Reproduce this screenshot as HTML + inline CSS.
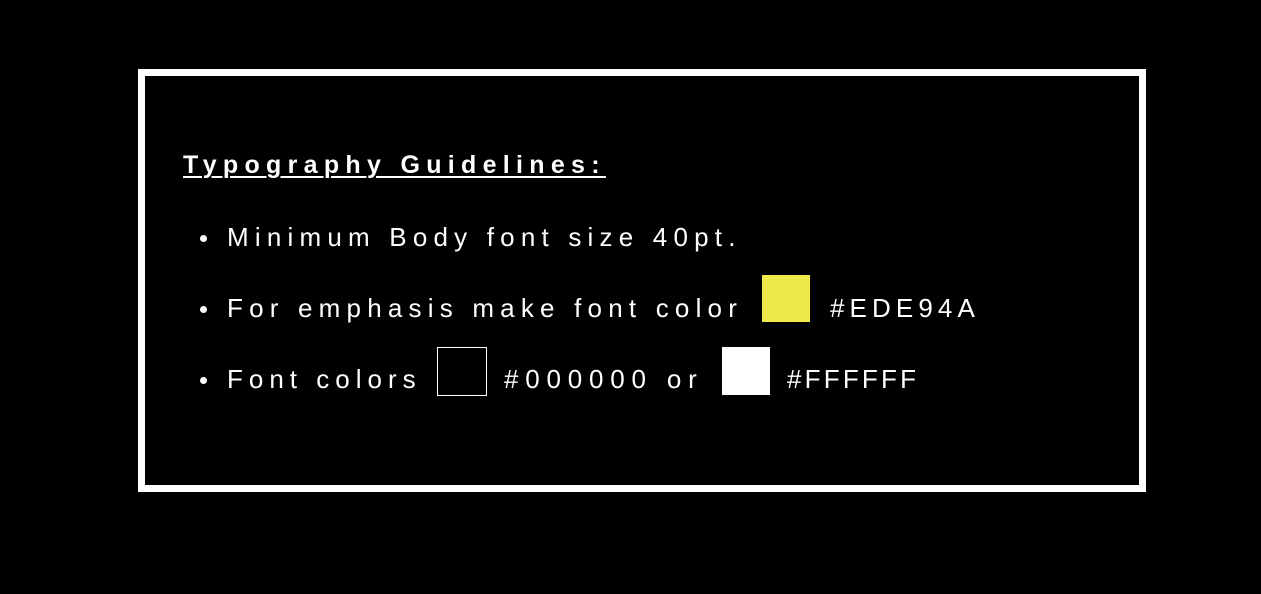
<!DOCTYPE html>
<html><head><style>
html,body{margin:0;padding:0;background:#000;width:1261px;height:594px;overflow:hidden;font-family:"Liberation Sans",sans-serif;color:#fff}
.box{position:absolute;left:138px;top:69px;width:994px;height:409px;border:7px solid #fff}
.t{position:absolute;white-space:nowrap;font-size:26px;letter-spacing:6.2px;line-height:1}
.h{position:absolute;left:183px;top:151px;font-size:25px;font-weight:bold;letter-spacing:6.3px;text-decoration:underline;text-underline-offset:3px;text-decoration-thickness:2px;white-space:nowrap}
.dot{position:absolute;width:7px;height:7px;border-radius:50%;background:#fff;left:200px}
.sw{position:absolute}
</style></head><body>
<div class="box"></div>
<div class="h">Typography Guidelines:</div>
<div class="dot" style="top:235px"></div>
<div class="dot" style="top:306px"></div>
<div class="dot" style="top:377px"></div>
<div class="t" style="left:227px;top:224px">Minimum Body font size 40pt.</div>
<div class="t" style="left:227px;top:295px">For emphasis make font color</div>
<div class="sw" style="left:762px;top:275px;width:48px;height:47px;background:#EDE94A"></div>
<div class="t" style="left:830px;top:295px;letter-spacing:5.1px">#EDE94A</div>
<div class="t" style="left:227px;top:366px;letter-spacing:6px">Font colors</div>
<div class="sw" style="left:437px;top:347px;width:48px;height:47px;border:1.5px solid #fff"></div>
<div class="t" style="left:504px;top:366px;letter-spacing:6.8px">#000000 or</div>
<div class="sw" style="left:722px;top:347px;width:48px;height:48px;background:#fff"></div>
<div class="t" style="left:787px;top:366px;letter-spacing:3.2px">#FFFFFF</div>
</body></html>
